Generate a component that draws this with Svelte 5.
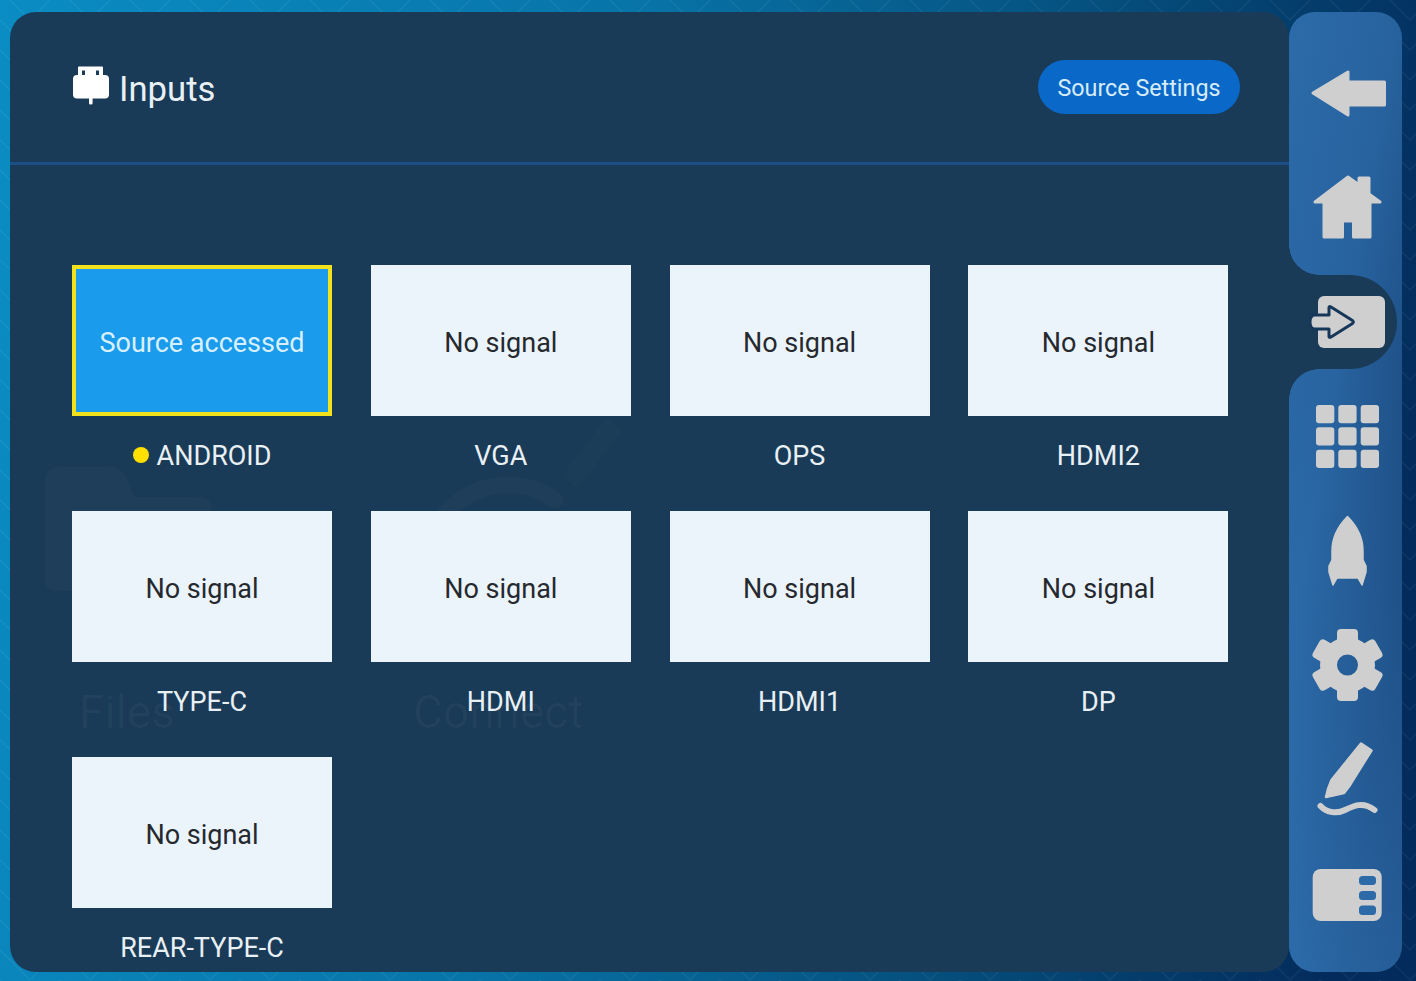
<script>
  const inputs = [
    { name: 'ANDROID', status: 'Source accessed', active: true },
    { name: 'VGA', status: 'No signal' },
    { name: 'OPS', status: 'No signal' },
    { name: 'HDMI2', status: 'No signal' },
    { name: 'TYPE-C', status: 'No signal' },
    { name: 'HDMI', status: 'No signal' },
    { name: 'HDMI1', status: 'No signal' },
    { name: 'DP', status: 'No signal' },
    { name: 'REAR-TYPE-C', status: 'No signal' }
  ];
  const gridCells = [9, 31.3, 53.7];
  const gearTeeth = [0, 60, 120, 180, 240, 300];
</script>

<div class="screen">
  <svg class="pattern" aria-hidden="true" width="100%" height="100%">
    <defs>
      <pattern id="chev" width="60" height="60" patternUnits="userSpaceOnUse">
        <path d="M0 20 L30 50 L60 20 M0 -10 L30 20 L60 -10 M0 50 L30 80 L60 50" fill="none" stroke="#fff" stroke-opacity="0.06" stroke-width="1.2" />
      </pattern>
    </defs>
    <rect width="100%" height="100%" fill="url(#chev)" />
  </svg>

  <main class="panel">
    <svg class="ghost" aria-hidden="true" width="1279" height="960" viewBox="0 0 1279 960">
      <path d="M35 470 q0 -15 15 -15 h50 q12 0 18 14 l6 16 h65 q12 0 12 12 v70 q0 12 -12 12 h-142 q-12 0 -12 -12 z" fill="#fff" fill-opacity="0.02" />
      <path d="M422 530 C432 480 500 455 545 488" fill="none" stroke="#fff" stroke-opacity="0.02" stroke-width="17" stroke-linecap="round" />
      <path d="M560 470 L604 412" fill="none" stroke="#fff" stroke-opacity="0.012" stroke-width="20" />
      <text x="69" y="716" class="ghost-text">Files</text>
      <text x="403" y="716" class="ghost-text">Connect</text>
    </svg>

    <header class="top">
      <div class="title">
        <svg class="title-icon" width="38" height="40" viewBox="0 0 38 40" aria-hidden="true">
          <path fill="#fff" d="M6 1.5 q0 -1 1 -1 h23 q1 0 1 1 v8 h-4 v-5 h-3 v5 h-11 v-5 h-3 v5 h-4 z" />
          <rect x="1" y="9" width="36" height="23.5" rx="4" fill="#fff" />
          <rect x="17" y="31" width="3.6" height="7.5" rx="1.6" fill="#fff" />
        </svg>
        <h1>Inputs</h1>
      </div>
      <button class="settings">Source Settings</button>
    </header>

    <section class="grid">
      {#each inputs as input}
        <article class="source">
          <div class="tile" class:on={input.active}>{input.status}</div>
          <div class="label">
            {#if input.active}<span class="dot"></span>{/if}{input.name}
          </div>
        </article>
      {/each}
    </section>
  </main>

  <nav class="side">
    <div class="item">
      <svg width="80" height="80" viewBox="0 0 80 80" aria-hidden="true">
        <path class="ic round" d="M6 40 L41 19 V29 H77.5 V52 H41 V62 Z" />
      </svg>
    </div>
    <div class="item">
      <svg width="80" height="80" viewBox="0 0 80 80" aria-hidden="true">
        <path class="ic round" d="M41 10 L52 18 V11 H62 V27 L73 35 H63 V70 H46.5 V54 H35.5 V70 H17 V35 H8 Z" />
      </svg>
    </div>
    <div class="item active">
      <svg width="80" height="80" viewBox="0 0 80 80" aria-hidden="true">
        <rect class="ic" x="11" y="14" width="67" height="52" rx="6" />
        <path class="arrow" d="M8 33 H22 V25.500 Q22 24 24 25 L45.500 38.500 Q47 40 45.500 41.500 L24 55 Q22 56 22 54.500 V47 H8 Q3 47 3 40 Q3 33 8 33 Z" />
      </svg>
    </div>
    <div class="item">
      <svg width="80" height="80" viewBox="0 0 80 80" aria-hidden="true">
        {#each gridCells as y}
          {#each gridCells as x}
            <rect class="ic" x={x} y={y} width="18.300" height="18.300" rx="3" />
          {/each}
        {/each}
      </svg>
    </div>
    <div class="item">
      <svg width="80" height="80" viewBox="0 0 80 80" aria-hidden="true">
        <path class="ic round-sm" d="M40.500 6.500 C50 16 56 28 56 41 V50 L59 56 V62 L55 75 L51 68 H30 L26 75 L22 62 V56 L25 50 V41 C25 28 31 16 40.500 6.500 Z" />
      </svg>
    </div>
    <div class="item">
      <svg width="80" height="80" viewBox="0 0 80 80" aria-hidden="true">
        <circle cx="40.500" cy="40" r="19" fill="none" stroke="#cfcfcf" stroke-width="17" />
        {#each gearTeeth as a}
          <rect class="ic" x="30" y="4" width="21" height="19" rx="4" transform="rotate({a} 40.500 40)" />
        {/each}
      </svg>
    </div>
    <div class="item">
      <svg width="80" height="80" viewBox="0 0 80 80" aria-hidden="true">
        <path class="ic round-pen" d="M54 4.500 L64.500 11.500 L42 47.500 L37 54 L19 58 L21 50 L24.500 41 Z" />
        <path d="M13.500 67 C20 74 30 75 38 71 C46 67 56 62 67.500 71" fill="none" stroke="#cfcfcf" stroke-width="6" stroke-linecap="round" />
      </svg>
    </div>
    <div class="item">
      <svg width="80" height="80" viewBox="0 0 80 80" aria-hidden="true">
        <rect class="ic" x="5.700" y="15" width="69" height="52" rx="8" />
        <rect class="slot" x="52" y="22" width="17" height="9" rx="3.500" />
        <rect class="slot" x="52" y="37" width="17" height="9" rx="3.500" />
        <rect class="slot" x="52" y="51.500" width="17" height="9.500" rx="3.500" />
      </svg>
    </div>
  </nav>
</div>

<style>
  :global(body) {
    margin: 0;
    background: #06589a;
  }
  .screen {
    position: relative;
    width: 1416px;
    height: 981px;
    box-sizing: border-box;
    padding: 12px 14px 9px 10px;
    display: grid;
    grid-template-columns: 1279px 113px;
    overflow: hidden;
    font-family: Roboto, "Liberation Sans", sans-serif;
    background: linear-gradient(100deg, #0a8dc4 0%, #0874a8 40%, #05517f 68%, #032b5b 95%);
  }
  .pattern {
    position: absolute;
    inset: 0;
  }
  .panel {
    position: relative;
    background: #1a3b57;
    border-radius: 26px;
    overflow: hidden;
  }
  .ghost {
    position: absolute;
    left: 0;
    top: 0;
    pointer-events: none;
  }
  .ghost-text {
    font-size: 46px;
    fill: #fff;
    fill-opacity: 0.03;
  }
  .top {
    position: relative;
    height: 150px;
    display: flex;
    align-items: center;
    justify-content: space-between;
    padding: 0 49px 0 62px;
    border-bottom: 3px solid #1b4f86;
  }
  .title {
    display: flex;
    align-items: center;
    gap: 9px;
    margin-top: 4px;
  }
  .title-icon {
    margin-top: -6px;
  }
  h1 {
    margin: 0;
    font-size: 34.700px;
    font-weight: 400;
    color: #e9f0f4;
    line-height: 40px;
  }
  .settings {
    width: 202px;
    height: 54px;
    border: 0;
    padding: 2px 0 0;
    border-radius: 27px;
    background: #0a68c8;
    color: #d6ecf8;
    font: 400 23.300px Roboto, "Liberation Sans", sans-serif;
  }
  .grid {
    position: relative;
    display: grid;
    grid-template-columns: repeat(4, 260px);
    column-gap: 38.800px;
    row-gap: 40px;
    padding: 100px 0 0 62px;
  }
  .tile {
    height: 151px;
    box-sizing: border-box;
    display: flex;
    align-items: center;
    justify-content: center;
    padding-top: 4px;
    background: #ebf3fb;
    color: #25292e;
    font-size: 27px;
  }
  .tile.on {
    background: #1a9bec;
    border: 4px solid #f2e21c;
    padding-top: 4px;
    color: #d8f0fd;
  }
  .label {
    height: 32px;
    box-sizing: border-box;
    margin-top: 23px;
    padding-top: 2px;
    display: flex;
    align-items: center;
    justify-content: center;
    color: #e9f0f4;
    font-size: 27px;
    line-height: 32px;
  }
  .dot {
    width: 16px;
    height: 16px;
    margin-right: 8px;
    margin-top: -3px;
    border-radius: 50%;
    background: #ffe000;
  }
  .side {
    position: relative;
    display: flex;
    flex-direction: column;
    padding: 23.800px 0 0 0;
    border-radius: 26px;
    background: linear-gradient(100deg, #2c6ba9 0%, #27629e 40%, #1a4679 78%, #143c6c 100%);
    overflow: hidden;
  }
  .side::before {
    content: "";
    position: absolute;
    inset: 0;
    background: linear-gradient(200deg, rgba(56, 130, 200, 0) 35%, rgba(56, 130, 200, 0.5) 100%);
  }
  .item {
    position: relative;
    flex: none;
    height: 94px;
    margin: 10.200px 0;
    width: 108px;
    display: flex;
    align-items: center;
    justify-content: center;
    padding-left: 8px;
    box-sizing: border-box;
  }
  .item.active {
    background: #1a3b57;
    border-radius: 0 47px 47px 0;
  }
  .item.active::before,
  .item.active::after {
    content: "";
    position: absolute;
    left: 0;
    width: 30px;
    height: 30px;
  }
  .item.active::before {
    top: -30px;
    background: radial-gradient(circle at 100% 0, transparent 29.500px, #1a3b57 30px);
  }
  .item.active::after {
    bottom: -30px;
    background: radial-gradient(circle at 100% 100%, transparent 29.500px, #1a3b57 30px);
  }
  .ic {
    fill: #cfcfcf;
  }
  .round {
    stroke: #cfcfcf;
    stroke-width: 3;
    stroke-linejoin: round;
  }
  .round-sm {
    stroke: #cfcfcf;
    stroke-width: 1.500;
    stroke-linejoin: round;
  }
  .round-pen {
    stroke: #cfcfcf;
    stroke-width: 2.500;
    stroke-linejoin: round;
  }
  .arrow {
    fill: #cfcfcf;
    stroke: #16365a;
    stroke-width: 3;
    stroke-linejoin: round;
  }
  .slot {
    fill: #2c6aa8;
  }
</style>
